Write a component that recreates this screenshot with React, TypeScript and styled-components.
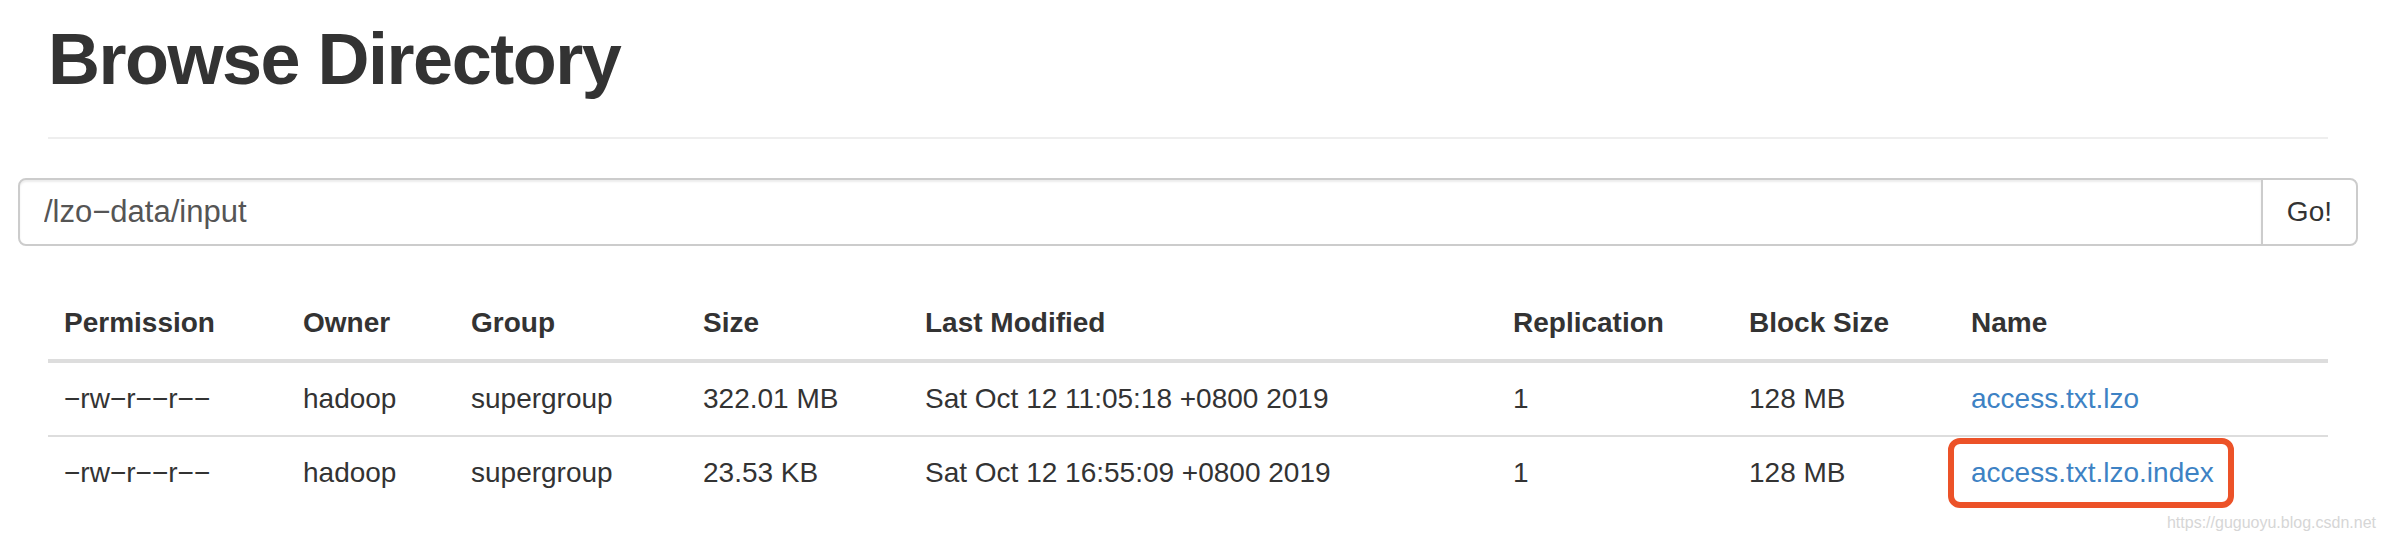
import React from "react";
import styled, { createGlobalStyle } from "styled-components";

const GlobalStyle = createGlobalStyle`
  html, body {
    margin: 0;
    padding: 0;
    background: #ffffff;
  }
  body {
    font-family: "Liberation Sans", Helvetica, Arial, sans-serif;
    font-size: 28px;
    line-height: 40px;
    color: #333333;
  }
  * { box-sizing: border-box; }
`;

const Page = styled.div`
  position: relative;
  width: 2386px;
  min-height: 544px;
  overflow: hidden;
`;

const Container = styled.div`
  width: 2280px;
  margin-left: 48px;
  padding-top: 20px;
`;

const PageHeader = styled.div`
  padding-bottom: 18px;
  border-bottom: 2px solid #eeeeee;
  margin-bottom: 39px;
`;

const Title = styled.h1`
  margin: 0 0 20px;
  font-size: 72px;
  line-height: 79px;
  font-weight: 700;
  letter-spacing: -1.5px;
  color: #333333;
`;

const SearchRow = styled.form`
  display: flex;
  margin: 0 -30px;
`;

const PathInput = styled.input`
  flex: 1;
  height: 68px;
  padding: 12px 24px;
  border: 2px solid #cccccc;
  border-radius: 8px 0 0 8px;
  box-shadow: inset 0 2px 2px rgba(0, 0, 0, 0.075);
  font-family: inherit;
  font-size: 31px;
  color: #555555;
  outline: none;
  background: #ffffff;
`;

const GoButton = styled.button`
  height: 68px;
  margin-left: -2px;
  padding: 0 24px;
  border: 2px solid #cccccc;
  border-radius: 0 8px 8px 0;
  background: #ffffff;
  font-family: inherit;
  font-size: 28px;
  color: #333333;
`;

const Table = styled.table`
  margin-top: 41px;
  width: 2280px;
  table-layout: fixed;
  border-collapse: separate;
  border-spacing: 0;
`;

const HeadCell = styled.th<{ $w: number }>`
  width: ${(p) => p.$w}px;
  padding: 16px;
  text-align: left;
  font-weight: 700;
  line-height: 40px;
  border-bottom: 4px solid #dddddd;
  white-space: nowrap;
`;

const BodyRow = styled.tr`
  & + & > td {
    border-top: 2px solid #dddddd;
  }
`;

const Cell = styled.td`
  padding: 16px;
  line-height: 40px;
  white-space: nowrap;
  vertical-align: top;
`;

const FileLink = styled.a<{ $marked?: boolean }>`
  position: relative;
  display: inline-block;
  color: #3d82c4;
  text-decoration: none;
  &::after {
    content: "";
    display: ${(p) => (p.$marked ? "block" : "none")};
    position: absolute;
    top: -15px;
    bottom: -15px;
    left: -23px;
    right: -20px;
    border: 6px solid #ec5228;
    border-radius: 12px;
  }
`;

const Watermark = styled.div`
  position: absolute;
  right: 10px;
  bottom: 12px;
  font-family: "Liberation Sans", Arial, sans-serif;
  font-size: 16px;
  line-height: 18px;
  color: #d6d6d6;
`;

const columns = [
  { label: "Permission", w: 239 },
  { label: "Owner", w: 168 },
  { label: "Group", w: 232 },
  { label: "Size", w: 222 },
  { label: "Last Modified", w: 588 },
  { label: "Replication", w: 236 },
  { label: "Block Size", w: 222 },
  { label: "Name", w: 373 },
];

const files = [
  {
    perm: "−rw−r−−r−−",
    owner: "hadoop",
    group: "supergroup",
    size: "322.01 MB",
    modified: "Sat Oct 12 11:05:18 +0800 2019",
    repl: "1",
    block: "128 MB",
    name: "access.txt.lzo",
    marked: false,
  },
  {
    perm: "−rw−r−−r−−",
    owner: "hadoop",
    group: "supergroup",
    size: "23.53 KB",
    modified: "Sat Oct 12 16:55:09 +0800 2019",
    repl: "1",
    block: "128 MB",
    name: "access.txt.lzo.index",
    marked: true,
  },
];

export default function App() {
  return (
    <Page>
      <GlobalStyle />
      <Container>
        <PageHeader>
          <Title>Browse Directory</Title>
        </PageHeader>
        <SearchRow onSubmit={(e) => e.preventDefault()}>
          <PathInput readOnly value="/lzo−data/input" />
          <GoButton type="submit">Go!</GoButton>
        </SearchRow>
        <Table>
          <thead>
            <tr>
              {columns.map((c) => (
                <HeadCell key={c.label} $w={c.w}>
                  {c.label}
                </HeadCell>
              ))}
            </tr>
          </thead>
          <tbody>
            {files.map((f) => (
              <BodyRow key={f.name}>
                <Cell>{f.perm}</Cell>
                <Cell>{f.owner}</Cell>
                <Cell>{f.group}</Cell>
                <Cell>{f.size}</Cell>
                <Cell>{f.modified}</Cell>
                <Cell>{f.repl}</Cell>
                <Cell>{f.block}</Cell>
                <Cell>
                  <FileLink href="#" $marked={f.marked}>
                    {f.name}
                  </FileLink>
                </Cell>
              </BodyRow>
            ))}
          </tbody>
        </Table>
      </Container>
      <Watermark>https://guguoyu.blog.csdn.net</Watermark>
    </Page>
  );
}
